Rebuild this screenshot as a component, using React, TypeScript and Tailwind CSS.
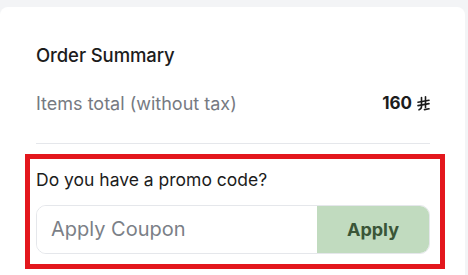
import React from "react";

const font = { fontFamily: "Inter, 'Noto Sans', sans-serif" };

const RiyalSign = () => (
  <svg width="13" height="15" viewBox="0 0 13 15" fill="none" stroke="currentColor" strokeWidth="1.6" strokeLinecap="round">
    <path d="M4.5 1.5V10.5Q4.5 12.8 2 13.8" />
    <path d="M8.5 0.8V11.5" />
    <path d="M1 6.2L12 4.2" />
    <path d="M1 9.6L12 7.6" />
    <path d="M7.5 13.6L12 12.8" />
  </svg>
);

export default function App() {
  return (
    <div className="w-[468px] h-[275px] bg-[#f3f4f6] pt-[7px] overflow-hidden" style={font}>
      <div className="w-[465px] h-full bg-white rounded-t-[8px] pl-[36px] pr-[35px] pt-[36px] flex flex-col">
        <h2 className="text-[18.5px] leading-[24px] font-medium text-[#1c1c1c] tracking-[-0.1px]">Order Summary</h2>

        <div className="mt-[24px] flex items-center justify-between">
          <span className="text-[18px] leading-[24px] text-[#767a82] font-normal">Items total (without tax)</span>
          <span className="flex items-center gap-[5px] text-[17px] font-bold text-[#1c1c1c]">
            160
            <RiyalSign />
          </span>
        </div>

        <div className="mt-[26px] h-px bg-[#e5e7eb]" />

        <div className="mt-[10px] ml-[-11px] mr-[-15px] border-[5px] border-[#e3171d] pl-[6px] pr-[10px] pt-[9px] pb-[10px]">
          <p className="text-[17.5px] leading-[24px] text-[#1c1c1c]">Do you have a promo code?</p>
          <div className="mt-[13px] h-[49px] flex rounded-[10px] border border-[#e5e7eb] overflow-hidden">
            <input
              className="flex-1 min-w-0 pl-[14px] text-[20px] outline-none placeholder:text-[#7b7f87] bg-white"
              placeholder="Apply Coupon"
              style={font}
            />
            <button className="w-[112px] bg-[#c1dbbf] text-[#3a5537] text-[18px] font-bold" style={font}>
              Apply
            </button>
          </div>
        </div>
      </div>
    </div>
  );
}
